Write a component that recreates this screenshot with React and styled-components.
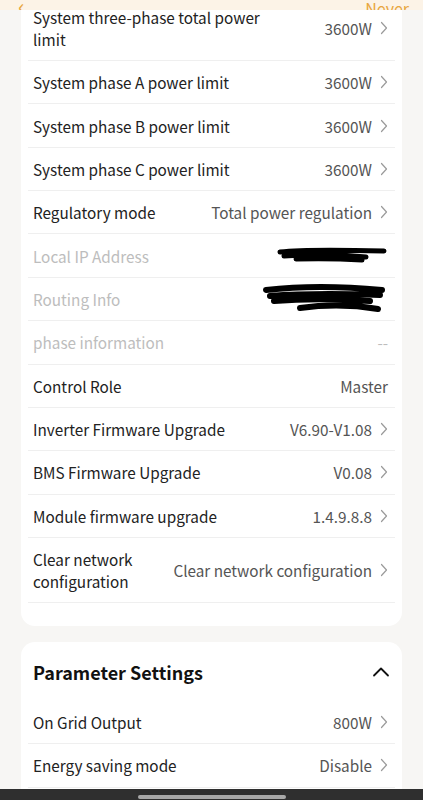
import React from "react";
import styled, { createGlobalStyle } from "styled-components";

const GlobalStyle = createGlobalStyle`
  html, body {
    margin: 0;
    padding: 0;
    background: #f7f6f4;
    font-family: "Noto Sans CJK SC", "Noto Sans", sans-serif;
    overflow: hidden;
  }
`;

const deviceRows = [
  { label: "System three-phase total power limit", value: "3600W", arrow: true, tall: true },
  { label: "System phase A power limit", value: "3600W", arrow: true },
  { label: "System phase B power limit", value: "3600W", arrow: true },
  { label: "System phase C power limit", value: "3600W", arrow: true },
  { label: "Regulatory mode", value: "Total power regulation", arrow: true },
  { label: "Local IP Address", muted: true, scribble: "ip" },
  { label: "Routing Info", muted: true, scribble: "route" },
  { label: "phase information", value: "--", muted: true },
  { label: "Control Role", value: "Master" },
  { label: "Inverter Firmware Upgrade", value: "V6.90-V1.08", arrow: true },
  { label: "BMS Firmware Upgrade", value: "V0.08", arrow: true },
  { label: "Module firmware upgrade", value: "1.4.9.8.8", arrow: true },
  { label: "Clear network configuration", value: "Clear network configuration", arrow: true, tall: true, narrow: true },
];

const paramRows = [
  { label: "On Grid Output", value: "800W", arrow: true },
  { label: "Energy saving mode", value: "Disable", arrow: true },
];

const Chevron = () => (
  <svg width="8" height="14" viewBox="0 0 8 14" fill="none">
    <path d="M1.5 1.5 L6.5 7 L1.5 12.5" stroke="#9a9a9a" strokeWidth="1.2" strokeLinecap="round" strokeLinejoin="round" />
  </svg>
);

const Scribble = ({ kind }) =>
  kind === "ip" ? (
    <svg width="112" height="20" viewBox="0 0 112 20">
      <path d="M4 6 C30 3, 70 4, 108 5 M8 10 C40 8, 70 9, 90 11 M20 13 C50 12, 70 13, 86 14" stroke="#000" strokeWidth="5" strokeLinecap="round" fill="none" />
    </svg>
  ) : (
    <svg width="128" height="34" viewBox="0 0 128 34">
      <path d="M6 8 C40 4, 80 4, 122 8 M10 14 C50 11, 90 12, 120 13 M14 19 C50 16, 80 17, 110 19 M40 26 C70 22, 100 24, 118 27" stroke="#000" strokeWidth="6" strokeLinecap="round" fill="none" />
    </svg>
  );

const Row = ({ row }) => (
  <RowWrap $tall={row.tall}>
    <Label $muted={row.muted} $narrow={row.narrow}>{row.label}</Label>
    <Right>
      {row.scribble ? (
        <Scribble kind={row.scribble} />
      ) : (
        <Value $muted={row.muted}>{row.value}</Value>
      )}
      {row.arrow && <Chevron />}
    </Right>
  </RowWrap>
);

const App = () => (
  <>
    <GlobalStyle />
    <Page>
      <TopStrip>
        <BackMark>‹</BackMark>
        <StripText>Never</StripText>
      </TopStrip>
      <Content>
        <Card $first>
          {deviceRows.map((r) => (
            <Row key={r.label} row={r} />
          ))}
        </Card>
        <Card>
          <CardHeader>
            <CardTitle>Parameter Settings</CardTitle>
            <svg width="18" height="12" viewBox="0 0 18 12" fill="none">
              <path d="M2 9.5 L9 2.5 L16 9.5" stroke="#111" strokeWidth="1.8" strokeLinecap="round" strokeLinejoin="round" />
            </svg>
          </CardHeader>
          {paramRows.map((r) => (
            <Row key={r.label} row={r} />
          ))}
        </Card>
      </Content>
      <NavBar>
        <Handle />
      </NavBar>
    </Page>
  </>
);

export default App;

const Page = styled.div`
  position: relative;
  width: 423px;
  height: 800px;
  overflow: hidden;
  background: #f7f6f4;
`;

const TopStrip = styled.div`
  position: absolute;
  top: 0;
  left: 0;
  right: 0;
  height: 10px;
  overflow: hidden;
  background: #fcf3e7;
  z-index: 5;
  display: flex;
  justify-content: space-between;
  align-items: flex-end;
  padding: 0 14px 0 18px;
`;

const BackMark = styled.span`
  color: #e8a640;
  font-size: 22px;
  line-height: 22px;
  margin-bottom: -6px;
`;

const StripText = styled.span`
  color: #e8a640;
  font-size: 16px;
  line-height: 16px;
  margin-bottom: -6px;
`;

const Content = styled.div`
  display: flex;
  flex-direction: column;
  gap: 16px;
  padding: 0 21px;
`;

const Card = styled.div`
  background: #fff;
  border-radius: 14px;
  padding: 0 7px 23px;
  margin-top: ${(p) => (p.$first ? "-22px" : "0")};
  border-top-left-radius: ${(p) => (p.$first ? "0" : "14px")};
  border-top-right-radius: ${(p) => (p.$first ? "0" : "14px")};
  padding-top: ${(p) => (p.$first ? "18px" : "0")};
`;

const RowWrap = styled.div`
  display: flex;
  align-items: center;
  justify-content: space-between;
  height: ${(p) => (p.$tall ? "64px" : "42.36px")};
  padding: 0 7px 0 5px;
  border-bottom: 1px solid #efefef;
  gap: 10px;
`;

const Label = styled.div`
  font-size: 15.3px;
  line-height: 22px;
  color: ${(p) => (p.$muted ? "#bdbdbd" : "#222")};
  max-width: ${(p) => (p.$narrow ? "120px" : "250px")};
`;

const Right = styled.div`
  display: flex;
  align-items: center;
  gap: 8px;
  flex-shrink: 0;
`;

const Value = styled.span`
  font-size: 15.3px;
  line-height: 22px;
  color: ${(p) => (p.$muted ? "#bdbdbd" : "#555")};
  white-space: nowrap;
`;

const CardHeader = styled.div`
  display: flex;
  align-items: center;
  justify-content: space-between;
  height: 58px;
  padding: 1px 5px 0 5px;
`;

const CardTitle = styled.div`
  font-size: 18px;
  font-weight: 700;
  color: #111;
`;

const NavBar = styled.div`
  position: absolute;
  left: 0;
  right: 0;
  bottom: 0;
  height: 10px;
  background: #2f2f2f;
  display: flex;
  justify-content: center;
  align-items: flex-end;
  padding-bottom: 1px;
`;

const Handle = styled.div`
  width: 148px;
  height: 4px;
  border-radius: 2px;
  background: #a8a8a8;
`;
